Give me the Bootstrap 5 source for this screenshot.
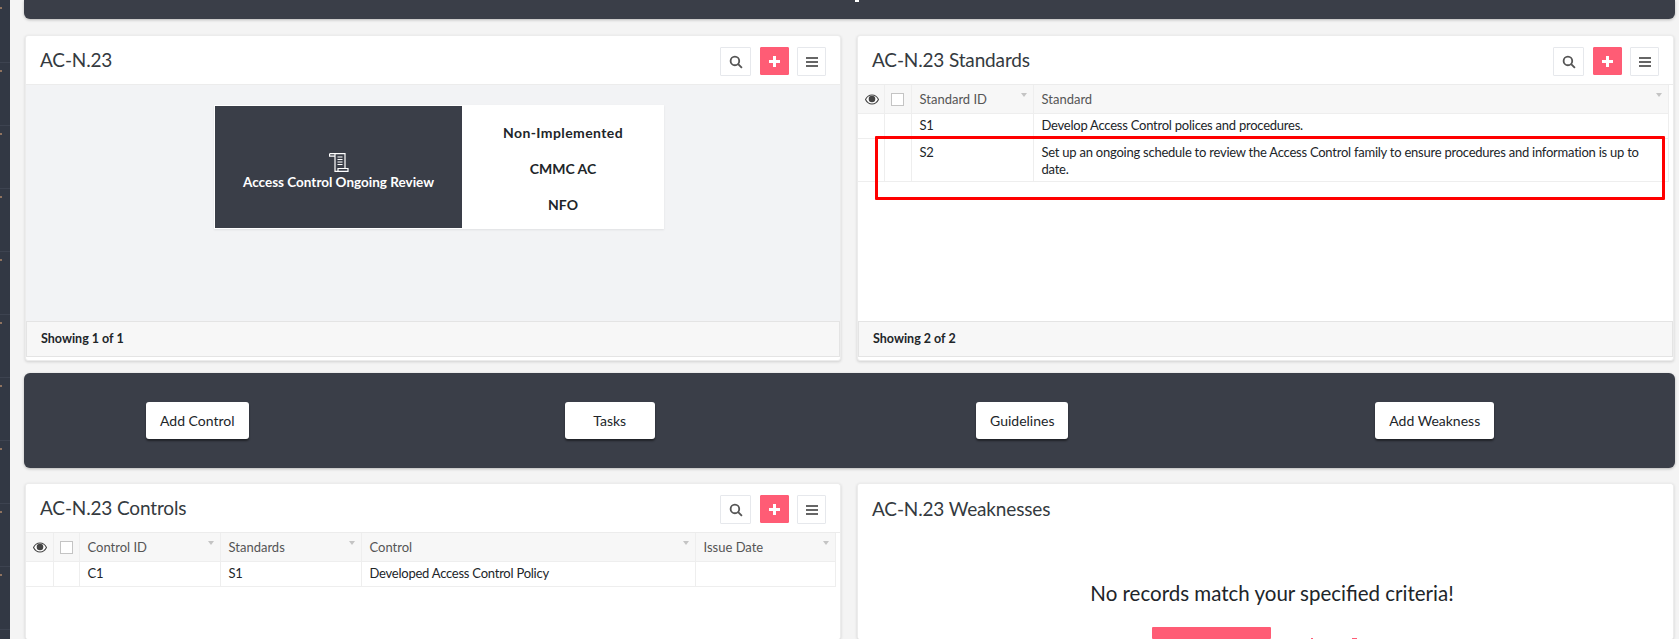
<!DOCTYPE html>
<html lang="en">
<head>
    <meta charset="UTF-8">
    <meta name="viewport" content="width=device-width, initial-scale=1.0">
    <title>AC-N.23</title>
    <link href="https://cdn.jsdelivr.net/npm/bootstrap@5.3.0/dist/css/bootstrap.min.css" rel="stylesheet">
    <style>
        html, body { height: 639px; overflow: hidden; }
        body {
            background-color: #f4f4f4;
            color: #212529;
            font-family: Lato, "Open Sans", sans-serif;
            font-size: 13px;
        }
        .side-rail {
            width: 10px;
            height: 639px;
            padding-top: 7px;
            background: repeating-linear-gradient(#323844 0, #323844 62px, #3d4350 62px, #3d4350 63px);
        }
        .side-rail span {
            display: block;
            width: 2px;
            height: 2px;
            margin-bottom: 61px;
            background: #8f7360;
        }
        .page-main { width: 1651px; margin-left: 14px; }
        .dark-band {
            background: #3a3e48;
            border-radius: 0 0 6px 6px;
            box-shadow: 0 1px 3px rgba(0, 0, 0, .25);
        }
        .top-band { height: 19px; margin-bottom: 16px; overflow: hidden; }
        .top-band i { display: block; width: 4px; height: 2px; margin-left: 831px; background: #fff; }
        .action-band { height: 95px; border-radius: 6px; margin: 12px 0 15px; padding-top: 29px; }
        .action-grid {
            display: grid;
            grid-template-columns: repeat(4, 412.5px);
            margin-left: -33px;
            justify-items: center;
        }
        .action-btn {
            min-width: 90px;
            height: 37px;
            padding: 0 14px;
            background: #fff;
            color: #212529;
            border: 0;
            border-radius: 3px;
            font-size: 14px;
            box-shadow: 0 2px 2px rgba(0, 0, 0, .45);
        }
        .panel-row { display: flex; gap: 16px; margin-left: 1px; }
        .panel-box {
            width: 816px;
            height: 326px;
            background: #fff;
            border: 1px solid #ececec;
            border-radius: 3px;
            box-shadow: 0 1px 3px rgba(0, 0, 0, .15);
            position: relative;
            display: flex;
            flex-direction: column;
        }
        .panel-box.wide-right { width: 817px; }
        .panel-box.panel-clip { height: 156px; border-bottom: 0; overflow: hidden; }
        .panel-head {
            height: 49px;
            flex: none;
            padding: 3px 14px 0;
            display: flex;
            align-items: center;
            justify-content: space-between;
            border-bottom: 1px solid #ececec;
        }
        .panel-head h5 {
            margin: 0 0 2px;
            font-family: Lato, sans-serif;
            font-size: 19px;
            font-weight: 400;
            letter-spacing: -.15px;
            color: #343a40;
        }
        .tool-btn {
            width: 29px;
            height: 29px;
            margin-left: 8px;
            padding: 0;
            display: inline-flex;
            align-items: center;
            justify-content: center;
            background: #fff;
            border: 1px solid #e6e8ec;
            border-radius: 1px;
        }
        .tool-btn.tool-search { width: 31px; }
        .tool-btn.tool-add { height: 28px; margin-left: 9px; background: #ff5c75; border-color: #ff5c75; }
        .panel-body-grey { flex: 1; background: #f2f3f5; padding-top: 20px; }
        .panel-body-white { flex: 1; background: #fff; }
        .panel-foot {
            height: 36px;
            flex: none;
            margin-bottom: 3px;
            padding-left: 14px;
            display: flex;
            align-items: center;
            background: #f7f7f7;
            border: 1px solid #e4e4e4;
            font-size: 12.5px;
            font-weight: 700;
        }
        .summary-card {
            width: 450px;
            height: 124px;
            margin-left: 188px;
            display: flex;
            background: #fff;
            padding: 1px 0;
            box-shadow: 0 1px 2px rgba(0, 0, 0, .08);
        }
        .summary-dark {
            width: 247px;
            margin-left: 1px;
            background: #3a3e48;
            color: #fff;
            font-weight: 700;
            font-size: 13.5px;
            display: flex;
            flex-direction: column;
            align-items: center;
            padding-top: 47px;
        }
        .summary-side {
            flex: 1;
            display: flex;
            flex-direction: column;
            align-items: center;
            padding-top: 18px;
            gap: 18px;
            font-size: 14px;
            font-weight: 700;
            line-height: 18px;
        }
        .status-text { letter-spacing: .4px; }
        .grid-table { width: 100%; margin: 0; table-layout: fixed; border-collapse: collapse; }
        .grid-table th, .grid-table td {
            padding: 0 8px;
            border: 1px solid #eee;
            border-top: 0;
            border-left: 0;
            vertical-align: middle;
            line-height: 17px;
        }
        .grid-table th {
            height: 28px;
            padding-top: 2px;
            background: #f7f7f7;
            color: #555;
            font-weight: 400;
            position: relative;
        }
        .grid-table td { height: 25px; color: #212529; letter-spacing: -.24px; }
        .grid-table td.cell-top { vertical-align: top; padding-top: 5px; height: 43px; }
        .grid-table th.cell-icon { padding: 0; text-align: center; }
        .grid-table th.cell-eye { padding: 0 0 0 2px; text-align: center; }
        .sort-mark {
            position: absolute;
            right: 6px;
            top: 8px;
            width: 0;
            height: 0;
            border-left: 3px solid transparent;
            border-right: 3px solid transparent;
            border-top: 4px solid #c4c4c4;
        }
        .check-box {
            display: inline-block;
            width: 13px;
            height: 13px;
            background: #fff;
            border: 1px solid #c4c4c4;
            vertical-align: middle;
        }
        .table-wrap { padding-right: 4px; }
        .red-frame {
            position: absolute;
            left: 17px;
            top: 100px;
            width: 790px;
            height: 64px;
            border: 3px solid #f00;
            border-radius: 1px;
        }
        .no-records {
            padding: 45px 0 0 13px;
            text-align: center;
            font-size: 20.5px;
            color: #212529;
        }
        .pink-row { display: flex; margin: 18px 0 0 294px; }
        .pink-btn {
            width: 119px;
            height: 12px;
            background: #ff5c75;
            border: 0;
            border-radius: 1px;
        }
        .pink-tick { width: 2px; height: 1px; margin: 11px 0 0 40px; background: #ff5c75; }
        .pink-tick.tick-long { width: 5px; margin-left: 39px; }
    </style>
</head>
<body>
    <div class="d-flex">
        <div class="side-rail flex-none">
            <span></span><span></span><span></span><span></span><span></span>
            <span></span><span></span><span></span><span></span><span></span>
        </div>
        <div class="page-main">
            <div class="dark-band top-band"><i></i></div>

            <div class="panel-row">
                <div class="panel-box">
                    <div class="panel-head">
                        <h5>AC-N.23</h5>
                        <div class="d-flex" id="tools1"></div>
                    </div>
                    <div class="panel-body-grey">
                        <div class="summary-card">
                            <div class="summary-dark">
                                <svg width="20" height="19" viewBox="0 0 20 19" fill="none" stroke="#fff" stroke-width="1.200"><path d="M.6.7H16V15.500M.6.7v2.500H6M6 .7V18.300H19V15.500H9v2.800"/><path d="M8.500 4h5M8.500 6.500h5M8.500 9h5M8.500 11.500h5"/></svg>
                                <span>Access Control Ongoing Review</span>
                            </div>
                            <div class="summary-side">
                                <span class="status-text">Non-Implemented</span>
                                <span>CMMC AC</span>
                                <span>NFO</span>
                            </div>
                        </div>
                    </div>
                    <div class="panel-foot">Showing 1 of 1</div>
                </div>

                <div class="panel-box wide-right">
                    <div class="panel-head">
                        <h5>AC-N.23 Standards</h5>
                        <div class="d-flex" id="tools2"></div>
                    </div>
                    <div class="panel-body-white table-wrap">
                        <table class="grid-table">
                            <colgroup><col style="width:26px"><col style="width:27px"><col style="width:122px"><col></colgroup>
                            <thead>
                                <tr>
                                    <th class="cell-eye" data-eye="1"></th>
                                    <th class="cell-icon"><span class="check-box"></span></th>
                                    <th>Standard ID<i class="sort-mark"></i></th>
                                    <th>Standard<i class="sort-mark"></i></th>
                                </tr>
                            </thead>
                            <tbody>
                                <tr><td></td><td></td><td>S1</td><td>Develop Access Control polices and procedures.</td></tr>
                                <tr><td></td><td></td><td class="cell-top">S2</td><td class="cell-top">Set up an ongoing schedule to review the Access Control family to ensure procedures and information is up to date.</td></tr>
                            </tbody>
                        </table>
                    </div>
                    <div class="panel-foot">Showing 2 of 2</div>
                    <div class="red-frame"></div>
                </div>
            </div>

            <div class="dark-band action-band">
                <div class="action-grid">
                    <div><button class="action-btn">Add Control</button></div>
                    <div><button class="action-btn">Tasks</button></div>
                    <div><button class="action-btn">Guidelines</button></div>
                    <div><button class="action-btn">Add Weakness</button></div>
                </div>
            </div>

            <div class="panel-row">
                <div class="panel-box panel-clip">
                    <div class="panel-head">
                        <h5>AC-N.23 Controls</h5>
                        <div class="d-flex" id="tools3"></div>
                    </div>
                    <div class="panel-body-white table-wrap">
                        <table class="grid-table">
                            <colgroup><col style="width:27px"><col style="width:26px"><col style="width:141px"><col style="width:141px"><col style="width:334px"><col></colgroup>
                            <thead>
                                <tr>
                                    <th class="cell-eye" data-eye="1"></th>
                                    <th class="cell-icon"><span class="check-box"></span></th>
                                    <th>Control ID<i class="sort-mark"></i></th>
                                    <th>Standards<i class="sort-mark"></i></th>
                                    <th>Control<i class="sort-mark"></i></th>
                                    <th>Issue Date<i class="sort-mark"></i></th>
                                </tr>
                            </thead>
                            <tbody>
                                <tr><td></td><td></td><td>C1</td><td>S1</td><td>Developed Access Control Policy</td><td></td></tr>
                            </tbody>
                        </table>
                    </div>
                </div>

                <div class="panel-box wide-right panel-clip">
                    <div class="panel-head border-0">
                        <h5>AC-N.23 Weaknesses</h5>
                    </div>
                    <div class="panel-body-white">
                        <div class="no-records">No records match your specified criteria!</div>
                        <div class="pink-row">
                            <button class="pink-btn"></button>
                            <i class="pink-tick"></i>
                            <i class="pink-tick tick-long"></i>
                        </div>
                    </div>
                </div>
            </div>
        </div>
    </div>

    <script>
        var searchIcon = '<svg width="14" height="14" viewBox="0 0 13 13" fill="none" stroke="#555" stroke-width="1.700"><circle cx="5.500" cy="5.500" r="4"/><path d="M8.500 8.500l3.500 3.500"/></svg>';
        var plusIcon = '<svg width="11" height="11" viewBox="0 0 11 11" fill="#fff"><path d="M4 0h3v4h4v3H7v4H4V7H0V4h4z"/></svg>';
        var menuIcon = '<svg width="12" height="10" viewBox="0 0 12 10" fill="#666"><path d="M0 0h12v2H0zM0 4h12v2H0zM0 8h12v2H0z"/></svg>';
        var eyeIcon = '<svg width="14" height="11" viewBox="0 0 14 11"><path d="M.5 5.500C2 2.500 4.500 1 7 1s5 1.500 6.500 4.500C12 8.500 9.500 10 7 10S2 8.500.5 5.500z" fill="#fff" stroke="#444" stroke-width="1.100"/><circle cx="7" cy="5" r="3.300" fill="#444"/></svg>';

        ['tools1', 'tools2', 'tools3'].forEach(function (id) {
            document.getElementById(id).innerHTML =
                '<button class="tool-btn tool-search">' + searchIcon + '</button>' +
                '<button class="tool-btn tool-add">' + plusIcon + '</button>' +
                '<button class="tool-btn">' + menuIcon + '</button>';
        });

        document.querySelectorAll('[data-eye]').forEach(function (cell) {
            cell.innerHTML = eyeIcon;
        });
    </script>
    <script src="https://cdn.jsdelivr.net/npm/bootstrap@5.3.0/dist/js/bootstrap.bundle.min.js"></script>
</body>
</html>
